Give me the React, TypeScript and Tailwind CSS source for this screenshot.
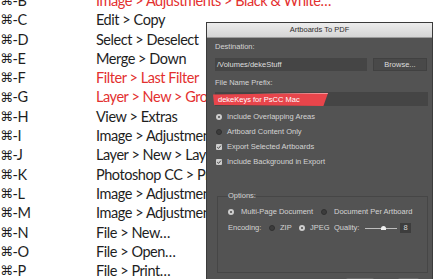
const rows: { key: string; menu: string; red?: boolean }[] = [
  { key: 'B', menu: 'Image > Adjustments > Black & White…', red: true },
  { key: 'C', menu: 'Edit > Copy' },
  { key: 'D', menu: 'Select > Deselect' },
  { key: 'E', menu: 'Merge > Down' },
  { key: 'F', menu: 'Filter > Last Filter', red: true },
  { key: 'G', menu: 'Layer > New > Group…', red: true },
  { key: 'H', menu: 'View > Extras' },
  { key: 'I', menu: 'Image > Adjustments > Invert' },
  { key: 'J', menu: 'Layer > New > Layer…' },
  { key: 'K', menu: 'Photoshop CC > Preferences > General…' },
  { key: 'L', menu: 'Image > Adjustments > Levels…' },
  { key: 'M', menu: 'Image > Adjustments > Curves…' },
  { key: 'N', menu: 'File > New…' },
  { key: 'O', menu: 'File > Open…' },
  { key: 'P', menu: 'File > Print…' },
]

function Radio({ on }: { on?: boolean }) {
  return on ? (
    <span className="flex h-[6px] w-[6px] shrink-0 items-center justify-center rounded-full bg-[#cdcdcd]">
      <span className="h-[2px] w-[2px] rounded-full bg-[#4a4a4a]" />
    </span>
  ) : (
    <span className="h-[6px] w-[6px] shrink-0 rounded-full border border-[#303030] bg-[#3c3c3c]" />
  )
}

function Check() {
  return (
    <span className="flex h-[6px] w-[6px] shrink-0 items-center justify-center rounded-[1px] bg-[#cdcdcd]">
      <svg viewBox="0 0 6 6" className="h-[6px] w-[6px]">
        <path d="M1.2 3.1 L2.5 4.4 L4.9 1.6" fill="none" stroke="#444" strokeWidth="1" />
      </svg>
    </span>
  )
}

function Dialog() {
  return (
    <div className="absolute left-[206px] top-[22px] h-[270px] w-[227px] border border-[#3b3b3b] bg-[#535353] font-['Liberation_Sans',sans-serif] text-[7.5px] leading-[10px] text-[#d4d4d4]">
      <div className="flex h-[15px] items-center justify-center border-b border-[#9c9c9c] bg-gradient-to-b from-[#ededed] to-[#d5d5d5] text-[#2e2e2e]">
        Artboards To PDF
      </div>

      <div className="pl-[8px] pr-[5px]">
        <div className="mt-[4px] h-[10px]">Destination:</div>
        <div className="mt-[6px] flex gap-[6px]">
          <div className="flex h-[13px] w-[152px] items-center bg-[#454545] pl-[2px] text-[#dedede]">/Volumes/dekeStuff</div>
          <div className="flex h-[13px] w-[54px] items-center justify-center border border-[#414141] bg-[#494949] text-[#dedede]">
            Browse...
          </div>
        </div>

        <div className="mt-[7px] h-[10px]">File Name Prefix:</div>
        <div className="relative mt-[4px] h-[14px] w-[213px] bg-[#454545]">
          <div className="absolute left-[-2px] top-[1px] flex h-[13px] w-[115px] items-center border-t border-[#f59a9e] bg-[#e8454b] pl-[5px] text-white [clip-path:polygon(0_12%,100%_0,96%_100%,1%_92%)]">
            dekeKeys for PsCC Mac
          </div>
        </div>

        <div className="mt-[3px] flex h-[15px] items-center gap-[5px] pl-[1px]">
          <Radio on />
          <span>Include Overlapping Areas</span>
        </div>
        <div className="flex h-[15px] items-center gap-[5px] pl-[1px]">
          <Radio />
          <span>Artboard Content Only</span>
        </div>
        <div className="flex h-[15px] items-center gap-[5px] pl-[1px]">
          <Check />
          <span>Export Selected Artboards</span>
        </div>
        <div className="flex h-[15px] items-center gap-[5px] pl-[1px]">
          <Check />
          <span>Include Background in Export</span>
        </div>

        <fieldset className="ml-[2px] mt-[22px] w-[211px] border border-[#464646] px-[10px] pb-[36px]">
          <legend className="h-[10px] px-0">Options:</legend>
          <div className="mt-[3px] flex h-[16px] items-center">
            <Radio on />
            <span className="ml-[7px] w-[80px]">Multi-Page Document</span>
            <Radio />
            <span className="ml-[7px]">Document Per Artboard</span>
          </div>
          <div className="flex h-[16px] items-center">
            <span className="w-[41px]">Encoding:</span>
            <Radio />
            <span className="ml-[5px] w-[19px]">ZIP</span>
            <Radio on />
            <span className="ml-[5px] w-[24px]">JPEG</span>
            <span className="w-[31px]">Quality:</span>
            <span className="relative flex h-[8px] w-[32px] items-center">
              <span className="h-px w-full bg-[#bdbdbd]" />
              <span className="absolute left-[16px] top-[2px] h-[4px] w-[5px] rounded-t-full bg-[#eeeeee]" />
            </span>
            <span className="ml-[3px] flex h-[10px] w-[11px] items-center justify-center bg-[#3d3d3d] text-[#d8d8d8]">8</span>
          </div>
        </fieldset>

        <div className="mt-[5px] flex justify-end gap-[24px] pr-[8px]">
          <div className="h-[12px] w-[28px] rounded-[2px] bg-[#6a6a6a]" />
          <div className="h-[12px] w-[21px] rounded-[2px] bg-[#6a6a6a]" />
        </div>
      </div>
    </div>
  )
}

export default function App() {
  return (
    <div className="relative h-[279px] w-[440px] overflow-hidden bg-white">
      <div className="mt-[-9px] flex flex-col font-['Lato',sans-serif] text-[14.5px] tracking-[-0.45px] text-[#1e1e1e]">
        {rows.map((r) => (
          <div key={r.key} className="flex h-[19.3px] items-center whitespace-nowrap leading-[19.3px]">
            <span className="flex w-[96px] shrink-0 items-center">
              <span className="font-['DejaVu_Sans',sans-serif] text-[13px] leading-none">⌘</span>
              <span>-{r.key}</span>
            </span>
            <span className={r.red ? 'text-[#e3302f]' : ''}>{r.menu}</span>
          </div>
        ))}
      </div>
      <Dialog />
    </div>
  )
}
